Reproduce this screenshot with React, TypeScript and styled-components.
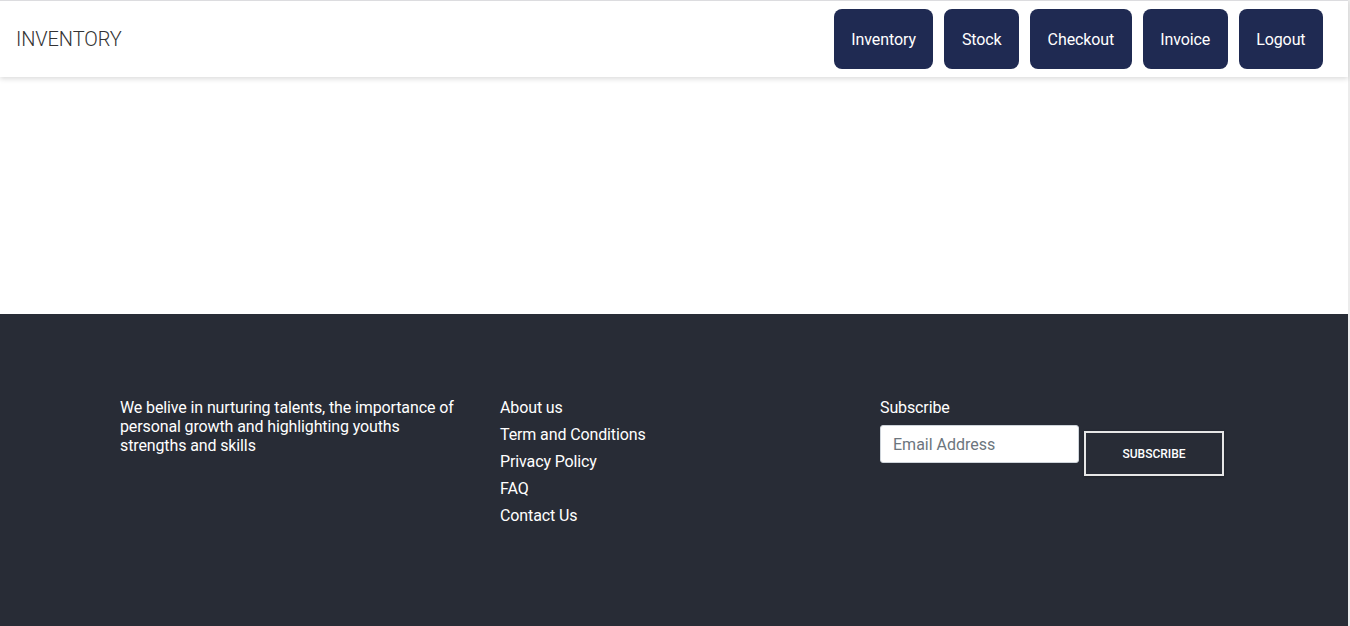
import React from "react";
import styled, { createGlobalStyle } from "styled-components";

const Global = createGlobalStyle`
  html, body { margin: 0; padding: 0; background: #fff; }
  body { font-family: Roboto, "Liberation Sans", Arial, sans-serif; }
  * { box-sizing: border-box; }
`;

const Page = styled.div`
  border-right: 2px solid #ececec;
  min-height: 626px;
  display: flex;
  flex-direction: column;
`;

const Nav = styled.header`
  height: 77px;
  border-top: 1px solid #dcdcdf;
  display: flex;
  align-items: center;
  justify-content: space-between;
  padding: 0 25px 0 16px;
  box-shadow: 0 2px 5px rgba(0, 0, 0, 0.14);
  position: relative;
  z-index: 1;
  background: #fff;
`;

const Brand = styled.div`
  font-size: 20px;
  font-weight: 300;
  color: #333;
  letter-spacing: -0.1px;
`;

const Menu = styled.nav`
  display: flex;
  gap: 11px;
`;

const NavButton = styled.button`
  height: 60px;
  padding: 0 17.5px;
  border: none;
  border-radius: 8px;
  background: #1f2a52;
  color: #fff;
  font-family: Roboto, "Liberation Sans", Arial, sans-serif;
  font-size: 16px;
  font-weight: 400;
  letter-spacing: -0.1px;
  cursor: pointer;
`;

const Main = styled.main`
  height: 237px;
  background: #fff;
`;

const Footer = styled.footer`
  flex: 1;
  background: #282c36;
  color: #fff;
  padding: 84px 0 90px 2px;
`;

const Container = styled.div`
  width: 1140px;
  margin: 0 auto;
  display: grid;
  grid-template-columns: repeat(3, 1fr);
`;

const Col = styled.div`
  padding: 0 15px;
  font-size: 16px;
  font-weight: 400;
  letter-spacing: -0.12px;
  line-height: 19px;
`;

const About = styled.p`
  margin: 0;
  max-width: 340px;
`;

const Links = styled.ul`
  list-style: none;
  margin: 0;
  padding: 0;
  display: flex;
  flex-direction: column;
  gap: 8px;
`;

const LinkItem = styled.li`
  color: #fff;
`;

const Label = styled.div`
  margin-bottom: 8px;
`;

const Form = styled.div`
  display: flex;
  align-items: flex-start;
`;

const Email = styled.input`
  width: 199px;
  height: 38px;
  border: 1px solid #ced4da;
  border-radius: 3px;
  padding: 0 12px;
  font-family: Roboto, "Liberation Sans", Arial, sans-serif;
  font-size: 16px;
  font-weight: 400;
  color: #495057;
  background: #fff;
  &::placeholder { color: #6c757d; }
`;

const SubButton = styled.button`
  margin: 6px 0 0 5px;
  width: 140px;
  height: 45px;
  background: transparent;
  border: 2px solid #e6e6e6;
  color: #fff;
  font-family: Roboto, "Liberation Sans", Arial, sans-serif;
  font-size: 12px;
  font-weight: 500;
  box-shadow: 0 1px 3px rgba(0, 0, 0, 0.3);
  cursor: pointer;
`;

const navItems = ["Inventory", "Stock", "Checkout", "Invoice", "Logout"];
const links = ["About us", "Term and Conditions", "Privacy Policy", "FAQ", "Contact Us"];

export default function App() {
  return (
    <Page>
      <Global />
      <Nav>
        <Brand>INVENTORY</Brand>
        <Menu>
          {navItems.map((n) => (
            <NavButton key={n}>{n}</NavButton>
          ))}
        </Menu>
      </Nav>
      <Main />
      <Footer>
        <Container>
          <Col>
            <About>
              We belive in nurturing talents, the importance of personal growth and highlighting youths strengths and skills
            </About>
          </Col>
          <Col>
            <Links>
              {links.map((l) => (
                <LinkItem key={l}>{l}</LinkItem>
              ))}
            </Links>
          </Col>
          <Col>
            <Label>Subscribe</Label>
            <Form>
              <Email placeholder="Email Address" />
              <SubButton>SUBSCRIBE</SubButton>
            </Form>
          </Col>
        </Container>
      </Footer>
    </Page>
  );
}
